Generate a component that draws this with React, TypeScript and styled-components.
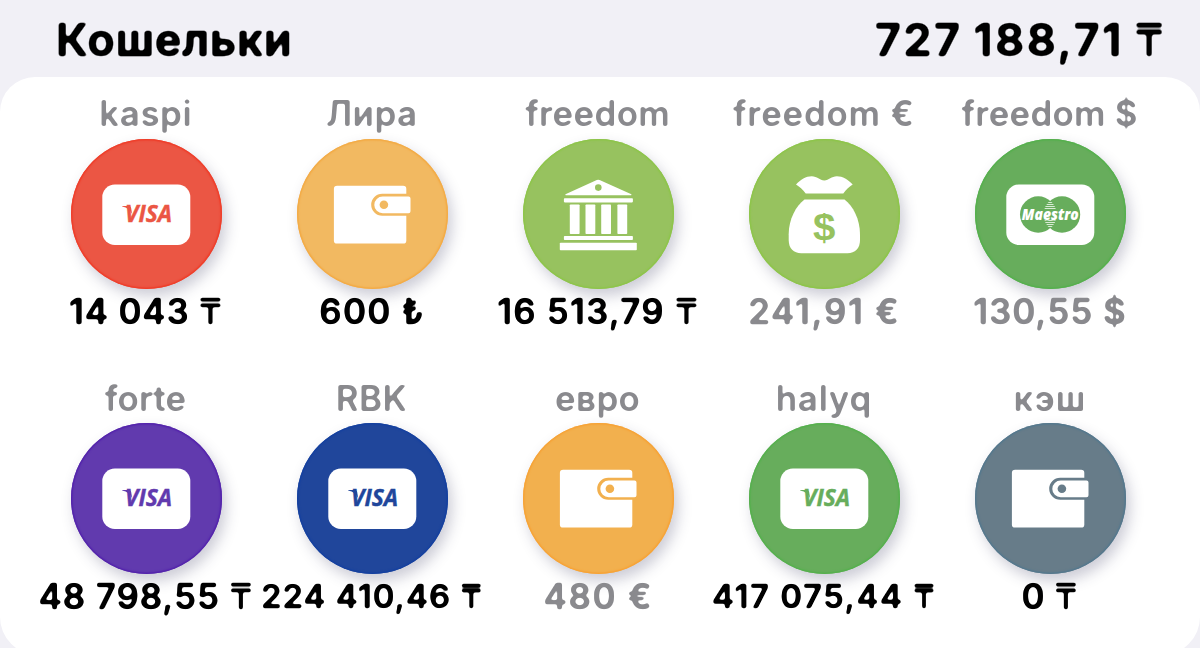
import { ReactNode } from 'react'
import styled, { createGlobalStyle } from 'styled-components'

const GlobalStyle = createGlobalStyle`
   body {
      margin: 0;
      overflow: hidden;
      background-color: #f1f0f6;
      font-family: Inter, 'Liberation Sans', sans-serif;
   }
`
const Page = styled.main`
   display: flex;
   flex-direction: column;
   width: 1200px;
   height: 648px;
   overflow: hidden;
`
const Header = styled.header`
   display: flex;
   flex: none;
   justify-content: space-between;
   align-items: center;
   height: 77px;
   padding: 2px 36px 0 56px;
   box-sizing: border-box;
   color: #000;
`
const Heading = styled.h1<{ $spacing: number }>`
   margin: 0;
   font-size: 45px;
   line-height: 56px;
   font-weight: 700;
   letter-spacing: ${({ $spacing }) => $spacing}px;
   margin-right: ${({ $spacing }) => -$spacing}px;
   word-spacing: -2px;
   -webkit-text-stroke: 0.5px currentColor;
   white-space: nowrap;
   filter: url(#round-large);
`
const Panel = styled.section`
   display: grid;
   flex: none;
   grid-template-columns: repeat(5, 226px);
   grid-auto-rows: 284.5px;
   justify-content: center;
   height: 578px;
   padding: 17px 4px 0 0;
   box-sizing: border-box;
   border-radius: 35px 35px 38px 38px;
   background-color: #fff;
`
const WalletItem = styled.article`
   display: flex;
   flex-direction: column;
   align-items: center;
`
const WalletName = styled.div<{ $spacing: number }>`
   height: 44.5px;
   color: #8a8a8e;
   font-size: 35px;
   line-height: 39px;
   font-weight: 600;
   letter-spacing: ${({ $spacing }) => $spacing}px;
   margin-right: ${({ $spacing }) => 1 - $spacing}px;
   white-space: nowrap;
   filter: url(#round-small);
`
const WalletCircle = styled.div<{ $fill: string; $edge: string }>`
   width: 151px;
   height: 150.5px;
   flex: none;
   border-radius: 50%;
   background-color: ${({ $fill }) => $fill};
   box-shadow: inset 0 0 1.5px 1.5px ${({ $edge }) => $edge},
      4px 7px 14px rgba(50, 50, 90, 0.25);
   & svg {
      display: block;
   }
`
const WalletAmount = styled.div<{
   $spacing: number
   $muted?: boolean
   $small?: boolean
}>`
   margin-top: 2px;
   color: ${({ $muted }) => ($muted ? '#8a8a8e' : '#000')};
   font-size: ${({ $small }) => ($small ? 33 : 35)}px;
   line-height: 40px;
   font-weight: 600;
   letter-spacing: ${({ $spacing }) => $spacing}px;
   margin-right: ${({ $spacing }) => 1 - $spacing}px;
   -webkit-text-stroke: 0.6px currentColor;
   white-space: nowrap;
   filter: url(#round-small);
`
const Currency = styled.span`
   font-weight: 500;
   -webkit-text-stroke: 0.3px currentColor;
`
const FilterDefs = styled.svg`
   position: absolute;
`

interface IIcon {
   color: string
}

const Glyph = ({ children }: { children: ReactNode }) => (
   <svg width="151" height="151" viewBox="0 0 151 151" fill="#fff">
      {children}
   </svg>
)

const VisaIcon = ({ color }: IIcon) => (
   <Glyph>
      <rect x="31.3" y="45.5" width="88" height="60.5" rx="12.5" />
      <text
         x="54"
         y="83.4"
         fill={color}
         fontFamily="Open Sans"
         fontSize="22.5"
         fontStyle="italic"
         fontWeight="700"
         textLength="47"
         lengthAdjust="spacingAndGlyphs"
         stroke={color}
         strokeWidth="0.4"
      >
         VISA
      </text>
      <path
         d="M51.2 67.1h6.6c1.2 0 2 .6 2.3 1.8l1 6c-1.6-3.6-4.9-6.3-9.9-7.4z"
         fill={color}
      />
   </Glyph>
)

const MaestroIcon = ({ color }: IIcon) => (
   <Glyph>
      <rect x="31.3" y="45.5" width="88" height="60.5" rx="12.5" />
      <circle cx="63.2" cy="75.5" r="18.2" fill={color} />
      <circle cx="87" cy="75.5" r="18.2" fill={color} />
      <clipPath id="overlap">
         <path d="M75.1 61.5a18.2 18.2 0 0 1 0 28a18.2 18.2 0 0 1 0-28z" />
      </clipPath>
      <path
         d="M68 63.5h14M68 65.5h14M68 67.5h14M68 69.5h14M68 81.5h14M68 83.5h14M68 85.5h14M68 87.5h14"
         clipPath="url(#overlap)"
         stroke="#fff"
         strokeWidth="1.2"
         opacity="0.75"
      />
      <text
         x="46.8"
         y="81"
         fontFamily="Open Sans"
         fontSize="15"
         fontStyle="italic"
         fontWeight="800"
         textLength="57"
         lengthAdjust="spacingAndGlyphs"
         stroke={color}
         strokeWidth="0.8"
         paintOrder="stroke"
      >
         Maestro
      </text>
   </Glyph>
)

const WalletIcon = ({ color }: IIcon) => (
   <Glyph>
      <rect x="36.9" y="46.8" width="72.4" height="57.8" rx="3.2" />
      <path d="M85.2 54.8H115v22H85.2a11 11 0 0 1 0-22z" fill={color} />
      <path d="M85.7 57.5h25.8a2 2 0 0 1 2 2v12.8a2 2 0 0 1-2 2H85.7a8.4 8.4 0 0 1 0-16.8z" />
      <circle cx="86.9" cy="65.8" r="4.3" fill={color} />
   </Glyph>
)

const BankIcon = ({ color }: IIcon) => (
   <Glyph>
      <path d="M73.8 41.1q1.4-.8 2.8 0L107.8 55q1.6 1.2 0 1.2H43q-1.6 0 0-1.2z" />
      <circle cx="75.3" cy="48.6" r="3.3" fill={color} />
      <rect x="40.9" y="59.2" width="69" height="4.2" rx="0.8" />
      <rect x="46.8" y="65.4" width="9.8" height="29.6" rx="0.8" />
      <rect x="62.5" y="65.4" width="9.8" height="29.6" rx="0.8" />
      <rect x="78.2" y="65.4" width="9.8" height="29.6" rx="0.8" />
      <rect x="94.4" y="65.4" width="9.8" height="29.6" rx="0.8" />
      <rect x="40.9" y="97" width="69" height="4" rx="0.8" />
      <rect x="36.8" y="103.7" width="77" height="7.6" rx="0.8" />
   </Glyph>
)

const MoneyBagIcon = ({ color }: IIcon) => (
   <Glyph>
      <path d="M47 45.6C51.5 40.5 57 37.2 62.7 37.2c5.5 0 8 4.2 12.6 4.2s7.1-4.2 12.6-4.2c5.7 0 11.3 3.3 15.8 8.4-3.2 2-6.7 5-9.4 8.9H56.7C54 50.6 50.2 47.6 47 45.6z" />
      <path d="M55.5 60.5H95.5C104 67 111 80 111 95.5V101C111 109.5 106 114.2 98.5 114.2H52.2C44.7 114.2 39.7 109.5 39.7 101V95.5C39.7 80 47 67 55.5 60.5z" />
      <text
         x="64"
         y="100.5"
         fill={color}
         fontFamily="Liberation Sans"
         fontSize="37"
         fontWeight="700"
         textLength="22.4"
         lengthAdjust="spacingAndGlyphs"
      >
         $
      </text>
   </Glyph>
)

interface IWallet {
   name: string
   nameSpacing: number
   amount: string
   amountSpacing: number
   fill: string
   edge: string
   icon: React.FC<IIcon>
   muted?: boolean
   small?: boolean
}

const WALLETS: IWallet[] = [
   {
      name: 'kaspi',
      nameSpacing: 0.5,
      amount: '14 043 ₸',
      amountSpacing: 0.8,
      fill: '#eb5644',
      edge: '#ef3c28',
      icon: VisaIcon,
   },
   {
      name: 'Лира',
      nameSpacing: 0.4,
      amount: '600 ₺',
      amountSpacing: 1.3,
      fill: '#f2b961',
      edge: '#f3aa44',
      icon: WalletIcon,
   },
   {
      name: 'freedom',
      nameSpacing: 0.3,
      amount: '16 513,79 ₸',
      amountSpacing: 1.2,
      fill: '#97c25f',
      edge: '#8dc549',
      icon: BankIcon,
   },
   {
      name: 'freedom €',
      nameSpacing: 0.7,
      amount: '241,91 €',
      amountSpacing: 1.7,
      fill: '#97c25f',
      edge: '#8dc549',
      icon: MoneyBagIcon,
      muted: true,
   },
   {
      name: 'freedom $',
      nameSpacing: 0.2,
      amount: '130,55 $',
      amountSpacing: 1,
      fill: '#67ad5c',
      edge: '#54b04c',
      icon: MaestroIcon,
      muted: true,
   },
   {
      name: 'forte',
      nameSpacing: 0,
      amount: '48 798,55 ₸',
      amountSpacing: 0.9,
      fill: '#613aae',
      edge: '#5322ac',
      icon: VisaIcon,
   },
   {
      name: 'RBK',
      nameSpacing: 0.4,
      amount: '224 410,46 ₸',
      amountSpacing: 1,
      fill: '#20469b',
      edge: '#1440a0',
      icon: VisaIcon,
      small: true,
   },
   {
      name: 'евро',
      nameSpacing: 0.3,
      amount: '480 €',
      amountSpacing: 1.7,
      fill: '#f2b04e',
      edge: '#f7a235',
      icon: WalletIcon,
      muted: true,
   },
   {
      name: 'halyq',
      nameSpacing: 0.7,
      amount: '417 075,44 ₸',
      amountSpacing: 1.5,
      fill: '#67ad5c',
      edge: '#54b04c',
      icon: VisaIcon,
      small: true,
   },
   {
      name: 'кэш',
      nameSpacing: 1,
      amount: '0 ₸',
      amountSpacing: 0.5,
      fill: '#677c89',
      edge: '#53788e',
      icon: WalletIcon,
   },
]

const renderAmount = (amount: string) =>
   amount.endsWith('₸') ? (
      <>
         {amount.slice(0, -1)}
         <Currency>₸</Currency>
      </>
   ) : (
      amount
   )

const Wallet = ({
   name,
   nameSpacing,
   amount,
   amountSpacing,
   fill,
   edge,
   icon: Icon,
   muted,
   small,
}: IWallet) => (
   <WalletItem>
      <WalletName $spacing={nameSpacing}>{name}</WalletName>
      <WalletCircle $fill={fill} $edge={edge}>
         <Icon color={fill} />
      </WalletCircle>
      <WalletAmount $spacing={amountSpacing} $muted={muted} $small={small}>
         {renderAmount(amount)}
      </WalletAmount>
   </WalletItem>
)

// softens the square stroke ends of the typeface into round ones
const RoundFilter = ({ id, blur }: { id: string; blur: number }) => (
   <filter id={id} colorInterpolationFilters="sRGB">
      <feGaussianBlur stdDeviation={blur} />
      <feComponentTransfer>
         <feFuncA type="linear" slope="3.2" intercept="-1.1" />
      </feComponentTransfer>
   </filter>
)

const App = () => (
   <>
      <GlobalStyle />
      <FilterDefs aria-hidden="true" width="0" height="0">
         <RoundFilter id="round-small" blur={1} />
         <RoundFilter id="round-large" blur={1.4} />
      </FilterDefs>
      <Page>
         <Header>
            <Heading $spacing={0.6}>Кошельки</Heading>
            <Heading as="div" $spacing={2.3}>
               {renderAmount('727 188,71 ₸')}
            </Heading>
         </Header>
         <Panel>
            {WALLETS.map((wallet) => (
               <Wallet key={wallet.name} {...wallet} />
            ))}
         </Panel>
      </Page>
   </>
)

export default App
